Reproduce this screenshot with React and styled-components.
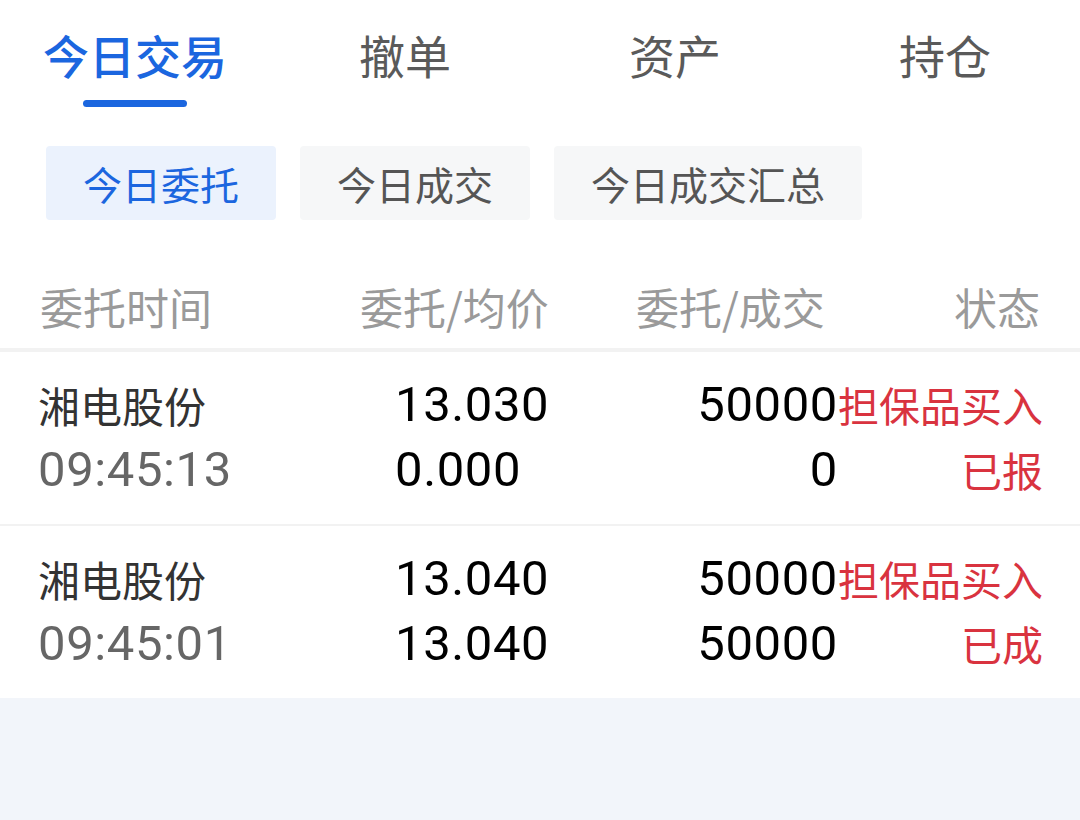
import React, { useState } from 'react'
import styled, { createGlobalStyle } from 'styled-components'

const GlobalStyle = createGlobalStyle`
  body {
    margin: 0;
    background: #ffffff;
    font-family: 'Noto Sans CJK SC', 'Noto Sans', sans-serif;
  }
`

const Page = styled.div`
  width: 1080px;
  height: 820px;
  display: flex;
  flex-direction: column;
  overflow: hidden;
  background: #ffffff;
`

const TabBar = styled.div`
  display: grid;
  grid-template-columns: repeat(4, 1fr);
`

const Tab = styled.div`
  display: flex;
  flex-direction: column;
  align-items: center;
  padding-top: 21px;
  cursor: pointer;
`

const TabText = styled.span`
  font-size: 46px;
  line-height: 66px;
  font-weight: ${(p) => (p.$active ? 500 : 400)};
  color: ${(p) => (p.$active ? '#1b66df' : '#5a5a5a')};
`

const TabLine = styled.div`
  width: 104px;
  height: 7px;
  margin-top: 13px;
  border-radius: 4px;
  background: ${(p) => (p.$active ? '#1b66df' : 'transparent')};
`

const SubTabs = styled.div`
  display: flex;
  gap: 24px;
  padding: 39px 0 0 46px;
`

const SubTab = styled.div`
  height: 74px;
  padding: 0 37px;
  display: flex;
  align-items: center;
  border-radius: 4px;
  font-size: 39px;
  background: ${(p) => (p.$active ? '#ebf2fd' : '#f6f7f8')};
  color: ${(p) => (p.$active ? '#1b66df' : '#555555')};
`

const Header = styled.div`
  display: grid;
  grid-template-columns: 320px 276px 1fr auto;
  padding: 56px 40px 12px 40px;
  border-bottom: 4px solid #f2f2f2;
  font-size: 43px;
  line-height: 60px;
  color: #9a9a9a;
`

const Row = styled.div`
  display: grid;
  grid-template-columns: 357px 200px 243px 205px;
  padding: 20px 37px 22px 38px;
  border-bottom: ${(p) => (p.$last ? 'none' : '2px solid #f2f2f2')};
`

const Cell = styled.div`
  display: flex;
  flex-direction: column;
  align-items: ${(p) => (p.$right ? 'flex-end' : 'flex-start')};
`

const Line = styled.span`
  height: 65px;
  line-height: 65px;
  white-space: nowrap;
  font-size: ${(p) => p.$size || 49}px;
  color: ${(p) => p.$color || '#000000'};
  font-family: ${(p) =>
    p.$num ? "Roboto, 'Noto Sans', sans-serif" : "'Noto Sans CJK SC', sans-serif"};
  letter-spacing: ${(p) => (p.$num ? '0.6px' : '0')};
`

const Filler = styled.div`
  flex: 1;
  background: #f2f5fa;
`

const tabs = ['今日交易', '撤单', '资产', '持仓']
const subTabs = ['今日委托', '今日成交', '今日成交汇总']

const orders = [
  { name: '湘电股份', time: '09:45:13', price: '13.030', avg: '0.000', qty: '50000', done: '0', type: '担保品买入', status: '已报' },
  { name: '湘电股份', time: '09:45:01', price: '13.040', avg: '13.040', qty: '50000', done: '50000', type: '担保品买入', status: '已成' },
]

export default function App() {
  const [tab, setTab] = useState(0)
  const [sub, setSub] = useState(0)

  return (
    <Page>
      <GlobalStyle />
      <TabBar>
        {tabs.map((t, i) => (
          <Tab key={t} onClick={() => setTab(i)}>
            <TabText $active={tab === i}>{t}</TabText>
            <TabLine $active={tab === i} />
          </Tab>
        ))}
      </TabBar>
      <SubTabs>
        {subTabs.map((t, i) => (
          <SubTab key={t} $active={sub === i} onClick={() => setSub(i)}>
            {t}
          </SubTab>
        ))}
      </SubTabs>
      <Header>
        <span>委托时间</span>
        <span>委托/均价</span>
        <span>委托/成交</span>
        <span>状态</span>
      </Header>
      {orders.map((o, i) => (
        <Row key={o.time} $last={i === orders.length - 1}>
          <Cell>
            <Line $size={42} $color="#333333">{o.name}</Line>
            <Line $num $color="#666666">{o.time}</Line>
          </Cell>
          <Cell>
            <Line $num>{o.price}</Line>
            <Line $num>{o.avg}</Line>
          </Cell>
          <Cell $right>
            <Line $num>{o.qty}</Line>
            <Line $num>{o.done}</Line>
          </Cell>
          <Cell $right>
            <Line $size={41} $color="#d9333f">{o.type}</Line>
            <Line $size={41} $color="#d9333f">{o.status}</Line>
          </Cell>
        </Row>
      ))}
      <Filler />
    </Page>
  )
}
